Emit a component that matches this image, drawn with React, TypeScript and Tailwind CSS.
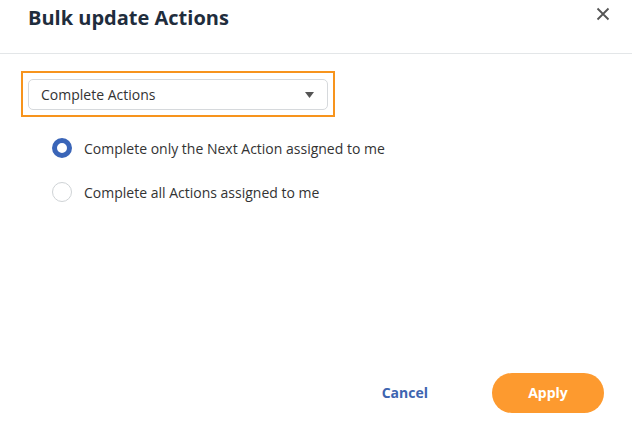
import React from "react";

export default function App() {
  return (
    <div className="w-[632px] h-[423px] bg-white relative overflow-hidden" style={{ fontFamily: '"Open Sans", sans-serif' }}>
      <div className="h-[54px] border-b border-[#e3e6e8] flex items-start justify-between pl-[28px] pr-[22px]">
        <h1 className="text-[20px] font-bold text-[#1f2d3d] leading-[36px] mt-0">Bulk update Actions</h1>
        <button className="mt-[7px] text-[#555]">
          <svg width="14" height="14" viewBox="0 0 14 14" fill="none" stroke="currentColor" strokeWidth="1.8">
            <path d="M1.5 1.5 L12.5 12.5 M12.5 1.5 L1.5 12.5" />
          </svg>
        </button>
      </div>
      <div className="pl-[21px] pt-[17px]">
        <div className="w-[314px] h-[46px] border-2 border-[#f7941d] px-[5px] py-[6px]">
          <div className="h-[31px] border border-[#d6d9dc] rounded-[5px] flex items-center justify-between pl-[12px] pr-[13px]">
            <span className="text-[14px] text-[#333]">Complete Actions</span>
            <svg width="9" height="6" viewBox="0 0 9 6"><path d="M0 0 H9 L4.5 6 Z" fill="#555" /></svg>
          </div>
        </div>
        <div className="pl-[31px] pt-[21px] flex flex-col gap-[24px]">
          <label className="flex items-center gap-[12px] h-[20px]">
            <span className="w-[20px] h-[20px] rounded-full border-[5px] border-[#3a65b8] bg-white" />
            <span className="text-[14px] text-[#333]">Complete only the Next Action assigned to me</span>
          </label>
          <label className="flex items-center gap-[12px] h-[20px]">
            <span className="w-[20px] h-[20px] rounded-full border border-[#cfd3d6] bg-white" />
            <span className="text-[14px] text-[#333]">Complete all Actions assigned to me</span>
          </label>
        </div>
      </div>
      <div className="absolute left-0 right-0 bottom-[10px] flex justify-end items-center pr-[28px] gap-[64px]">
        <button className="text-[14px] font-bold text-[#3d64b0] leading-[20px] -mt-[1px]">Cancel</button>
        <button className="w-[112px] h-[40px] rounded-full bg-[#fd9a2f] text-white text-[14px] font-bold leading-[38px]">Apply</button>
      </div>
    </div>
  );
}
